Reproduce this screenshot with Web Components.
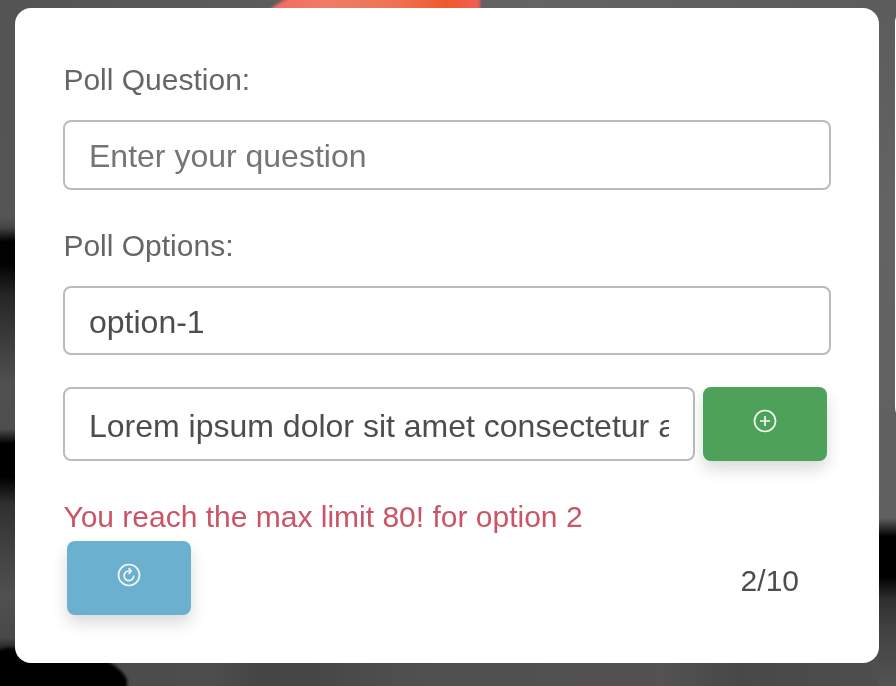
<!DOCTYPE html>
<html lang="en">
<head>
<meta charset="utf-8">
<title>Poll</title>
<style>
html, body { margin: 0; height: 100%; overflow: hidden; }
body { font-family: "Liberation Sans", Arial, sans-serif; color: #4d4d4d; }
</style>
</head>
<body>
<poll-page>
  <poll-card>
    <poll-label>Poll Question:</poll-label>
    <poll-field style="--h:70px;--c:#757575;--mt:10px;--dy:1px">Enter your question</poll-field>
    <poll-label style="--mt:38px">Poll Options:</poll-label>
    <poll-field style="--h:69px;--mt:10px;--dy:2px">option-1</poll-field>
    <poll-row style="--mt:32px">
      <poll-field style="--h:74px;--w:632px;--mt:0px;--dy:2px">Lorem ipsum dolor sit amet consectetur adipisicing elit</poll-field>
      <poll-button kind="add"></poll-button>
    </poll-row>
    <poll-error>You reach the max limit 80! for option 2</poll-error>
    <poll-footer>
      <poll-button kind="reset"></poll-button>
      <span>2/10</span>
    </poll-footer>
  </poll-card>
</poll-page>
<script>
const define = (name, html) => customElements.define(name, class extends HTMLElement {
  constructor() {
    super();
    this.attachShadow({ mode: 'open' }).innerHTML = html;
  }
});

define('poll-page', `
<style>
  :host { display: block; position: relative; box-sizing: border-box; width: 896px; height: 686px; padding: 8px 17px 23px 15px; overflow: hidden; background: #545454; }
  svg { position: absolute; inset: 0; }
</style>
<svg width="896" height="686" viewBox="0 0 896 686" aria-hidden="true">
  <defs>
    <linearGradient id="top"><stop offset="0" stop-color="#545454"/><stop offset=".6" stop-color="#646464"/><stop offset="1" stop-color="#5c5c5c"/></linearGradient>
    <linearGradient id="left" x2="0" y2="1">
      <stop offset="0" stop-color="#545454"/><stop offset=".315" stop-color="#555"/><stop offset=".332" stop-color="#444"/>
      <stop offset=".352" stop-color="#000"/><stop offset=".385" stop-color="#020202"/><stop offset=".43" stop-color="#262626"/>
      <stop offset=".5" stop-color="#3d3d3d"/><stop offset=".56" stop-color="#505050"/><stop offset=".625" stop-color="#4e4e4e"/>
      <stop offset=".647" stop-color="#000"/><stop offset=".695" stop-color="#000"/><stop offset=".735" stop-color="#303030"/>
      <stop offset=".8" stop-color="#414141"/><stop offset=".87" stop-color="#505050"/><stop offset=".93" stop-color="#484848"/><stop offset=".96" stop-color="#000"/>
    </linearGradient>
    <linearGradient id="right" x2="0" y2="1">
      <stop offset="0" stop-color="#5c5c5c"/><stop offset=".3" stop-color="#636363"/><stop offset=".755" stop-color="#606060"/>
      <stop offset=".782" stop-color="#000"/><stop offset=".84" stop-color="#000"/><stop offset=".875" stop-color="#303030"/>
      <stop offset=".92" stop-color="#424242"/><stop offset="1" stop-color="#535353"/>
    </linearGradient>
    <linearGradient id="bottom">
      <stop offset="0" stop-color="#4a4a4a"/><stop offset=".23" stop-color="#4d4d4d"/><stop offset=".28" stop-color="#454545"/><stop offset=".34" stop-color="#464646"/>
      <stop offset=".45" stop-color="#504f4f"/><stop offset=".75" stop-color="#535151"/><stop offset=".84" stop-color="#484848"/><stop offset="1" stop-color="#4e4e4e"/>
    </linearGradient>
    <linearGradient id="coral"><stop offset="0" stop-color="#f36b62"/><stop offset=".3" stop-color="#ee7c65"/><stop offset=".6" stop-color="#ee7354"/><stop offset=".84" stop-color="#ef592b"/><stop offset="1" stop-color="#f06057"/></linearGradient>
    <filter id="soft" color-interpolation-filters="sRGB"><feGaussianBlur stdDeviation="1.6"/></filter>
  </defs>
  <rect width="896" height="30" fill="url(#top)"/>
  <rect width="32" height="686" fill="url(#left)"/>
  <rect x="862" width="34" height="686" fill="url(#right)"/>
  <rect x="15" y="640" width="864" height="46" fill="url(#bottom)"/>
  <path d="M-10 652L8 648L90 653Q121 665 127 680V700H-10Z" fill="#000" filter="url(#soft)"/>
  <path d="M267 12Q280 0 304-8H480V12Z" fill="url(#coral)" filter="url(#soft)"/>
  <path d="M896 17Q895 19 895 23V406Q895 410 896 413Z" fill="#fff"/>
</svg>
<slot></slot>`);

define('poll-card', `
<style>
  :host { display: flex; flex-direction: column; position: relative; box-sizing: border-box; height: 655px; padding: 54px 48px 48px; border-radius: 16px; background: #fff; will-change: transform; }
</style>
<slot></slot>`);

define('poll-label', `
<style>
  :host { display: block; margin-top: var(--mt, 0); padding-left: .4px; height: 48px; line-height: 36px; font-size: 30px; color: #666; white-space: nowrap; }
</style>
<slot></slot>`);

define('poll-field', `
<style>
  :host { display: block; box-sizing: border-box; flex: none; width: var(--w, 100%); height: var(--h); margin-top: var(--mt, 0); padding: 0 24px; border: 2px solid #bbb; border-radius: 8px; background: #fff; color: var(--c, #4d4d4d); font-size: 32px; }
  div { height: 100%; box-sizing: border-box; padding-top: calc(var(--dy, 0px) * 2); display: flex; align-items: center; overflow: hidden; white-space: nowrap; }
</style>
<div><span><slot></slot></span></div>`);

define('poll-row', `
<style>
  :host { display: flex; gap: 8px; margin-top: var(--mt); height: 74px; }
</style>
<slot></slot>`);

define('poll-error', `
<style>:host { display: block; box-sizing: border-box; height: 80px; padding: 38px 0 0 .4px; line-height: 36px; font-size: 30px; color: #cb5566; white-space: nowrap; }</style>
<slot></slot>`);

define('poll-footer', `
<style>
  :host { display: flex; justify-content: space-between; align-items: center; height: 74px; padding: 0 32px 0 4px; }
  ::slotted(span) { font-size: 30px; line-height: 36px; padding-top: 6px; }
</style>
<slot></slot>`);

customElements.define('poll-button', class extends HTMLElement {
  connectedCallback() {
    const add = this.getAttribute('kind') === 'add';
    this.attachShadow({ mode: 'open' }).innerHTML = `
<style>
  :host { display: block; flex: none; }
  button { display: flex; justify-content: center; box-sizing: border-box; width: 124px; height: 74px; margin: 0; padding: 22px 0 0; border: 0; border-radius: 8px; background: ${add ? '#4ea158' : '#6bb1cf'}; box-shadow: 0 8px 16px rgba(0,0,0,.15); }
  svg { display: block; }
</style>
<button type="button" aria-label="${add ? 'Add option' : 'Reset'}">
  <svg width="24" height="24" viewBox="0 0 24 24" fill="none" stroke="#f3f8f5" stroke-width="1.7">
    <circle cx="12" cy="12" r="10.5"/>
    ${add ? '<path d="M12 7v10M7 12h10"/>'
          : '<path d="M16.7 12.6A4.8 4.8 0 1 1 11.9 8H13.6"/><path d="M11.6 5.2L14.2 8L11.6 10.8"/>'}
  </svg>
</button>`;
  }
});
</script>
</body>
</html>
